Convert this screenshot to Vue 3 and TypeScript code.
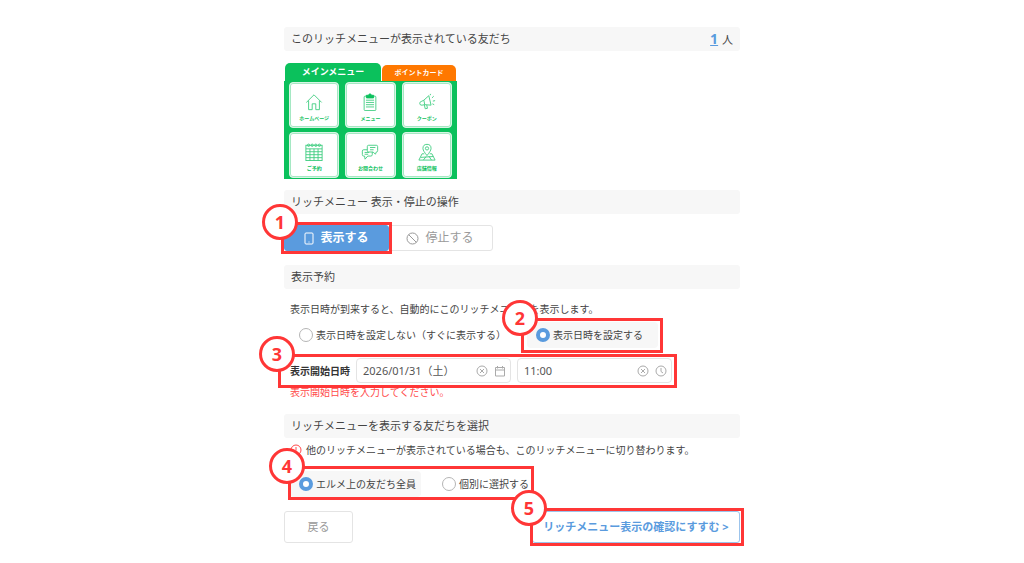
<script setup lang="ts">
import { ref } from 'vue'

interface Tile {
  label: string
  icon: string
}

const tiles: Tile[] = [
  { label: 'ホームページ', icon: 'home' },
  { label: 'メニュー', icon: 'clipboard' },
  { label: 'クーポン', icon: 'megaphone' },
  { label: 'ご予約', icon: 'calendar' },
  { label: 'お問合わせ', icon: 'chat' },
  { label: '店舗情報', icon: 'map' },
]

const schedule = ref('later')
const target = ref('all')
const startDate = ref('2026/01/31（土）')
const startTime = ref('11:00')
</script>

<template>
  <main class="page">
    <header class="bar bar-split">
      <span>このリッチメニューが表示されている友だち</span>
      <span class="count"><a href="#friends">1</a> 人</span>
    </header>

    <section class="preview" aria-label="リッチメニュー">
      <div class="tabs">
        <span class="tab tab-main">メインメニュー</span>
        <span class="tab tab-point">ポイントカード</span>
      </div>
      <div class="tiles">
        <div v-for="tile in tiles" :key="tile.icon" class="tile">
          <svg viewBox="0 0 20 20" aria-hidden="true">
            <template v-if="tile.icon === 'home'">
              <path d="M1.500 10.500 10 2l8.500 8.500M4 8.500V18.500h4v-6.500h4v6.500h4V8.500" />
            </template>
            <template v-else-if="tile.icon === 'clipboard'">
              <rect x="3.500" y="3.500" width="13" height="16" rx="1" />
              <path class="solid" d="M6 5.500V2.500h2.500a1.500 1.500 0 0 1 3 0H14v3z" />
              <path d="M5.500 8h9M5.500 10.500h9M5.500 13h9M5.500 15.500h9" />
            </template>
            <template v-else-if="tile.icon === 'megaphone'">
              <path d="M3.500 9.500 6.500 8 12 3l2.500 10.500-7-.5-3 .5a2 2 0 0 1-1-4zM6.500 8l1 5M7 13l1 4.500 2.500-.5-.8-3.800" />
              <path d="M13.500 2.500 14 1M15.500 5.500l2-2M16.500 9l2.500-.5M16 12l2 1" />
            </template>
            <template v-else-if="tile.icon === 'calendar'">
              <rect x="1" y="2.500" width="18" height="17" />
              <path d="M1 6.500h18M1 9.700h18M1 13h18M1 16.300h18M5.500 6.500v13M10 6.500v13M14.500 6.500v13" />
              <circle cx="4" cy="2.500" r="1.300" /><circle cx="8" cy="2.500" r="1.300" />
              <circle cx="12" cy="2.500" r="1.300" /><circle cx="16" cy="2.500" r="1.300" />
            </template>
            <template v-else-if="tile.icon === 'chat'">
              <path d="M8.500 2.500h8.500a1.500 1.500 0 0 1 1.500 1.500v4.500a1.500 1.500 0 0 1-1.500 1.500l-1 2.500-2.500-2.500h-5A1.500 1.500 0 0 1 7 8.500V4a1.500 1.500 0 0 1 1.500-1.500zM10 5h6M10 7.500h4" />
              <path d="M7 7.500H3A1.500 1.500 0 0 0 1.500 9v4A1.500 1.500 0 0 0 3 14.500h1l.5 3.500 3-3.500H11a1.500 1.500 0 0 0 1.500-1.500v-3M4 10.500h5M4 12.500h4" />
            </template>
            <template v-else>
              <path d="M10 14C7.500 10.500 5.500 8.500 5.500 6a4.500 4.500 0 0 1 9 0c0 2.500-2 4.500-4.500 8z" />
              <circle cx="10" cy="6" r="1.800" />
              <path d="M7 12H4.500l-3.500 7h18l-3.500-7H13M3 16l14-1M6 19l3-4M12 14.500l3 4.500" />
            </template>
          </svg>
          <span>{{ tile.label }}</span>
        </div>
      </div>
    </section>

    <h2 class="bar">リッチメニュー 表示・停止の操作</h2>
    <div class="actions">
      <div class="marked mark-show">
        <button type="button" class="btn btn-show">
          <svg width="10" height="13" viewBox="0 0 10 13" aria-hidden="true">
            <rect x="1" y="1" width="8" height="11" rx="1" /><path d="M4.500 10h1" />
          </svg>
          表示する
        </button>
        <div class="frame"><span class="step">1</span></div>
      </div>
      <button type="button" class="btn btn-stop">
        <svg width="13" height="13" viewBox="0 0 13 13" aria-hidden="true">
          <circle cx="6.500" cy="6.500" r="5.500" /><path d="m2.600 2.600 7.800 7.800" />
        </svg>
        停止する
      </button>
    </div>

    <h2 class="bar">表示予約</h2>
    <div class="body">
      <p class="lead">表示日時が到来すると、自動的にこのリッチメニューを表示します。</p>
      <div class="radios radios-schedule">
        <label class="choice">
          <input v-model="schedule" type="radio" name="schedule" value="now">表示日時を設定しない（すぐに表示する）
        </label>
        <div class="marked mark-schedule">
          <label class="choice">
            <input v-model="schedule" type="radio" name="schedule" value="later">表示日時を設定する
          </label>
          <div class="frame"><span class="step">2</span></div>
        </div>
      </div>

      <div class="marked mark-date">
        <div class="date-row">
          <label class="date-label" for="start-date">表示開始日時</label>
          <div class="field">
            <input id="start-date" v-model="startDate" type="text">
            <button type="button" aria-label="日付をクリア" @click="startDate = ''">
              <svg viewBox="0 0 12 12"><circle cx="6" cy="6" r="5" /><path d="m4 4 4 4M8 4 4 8" /></svg>
            </button>
            <svg viewBox="0 0 12 12" aria-hidden="true">
              <path d="M1.500 2.500h9v8.500h-9zM1.500 5h9M3.500 1v2.500M8.500 1v2.500" />
            </svg>
          </div>
          <div class="field">
            <input v-model="startTime" type="text" aria-label="表示開始時刻">
            <button type="button" aria-label="時刻をクリア" @click="startTime = ''">
              <svg viewBox="0 0 12 12"><circle cx="6" cy="6" r="5" /><path d="m4 4 4 4M8 4 4 8" /></svg>
            </button>
            <svg viewBox="0 0 12 12" aria-hidden="true">
              <circle cx="6" cy="6" r="5" /><path d="M6 3v3.500l2 1.500" />
            </svg>
          </div>
        </div>
        <div class="frame"><span class="step">3</span></div>
      </div>
      <p class="error">表示開始日時を入力してください。</p>
    </div>

    <h2 class="bar">リッチメニューを表示する友だちを選択</h2>
    <div class="body">
      <p class="note">
        <svg width="12" height="12" viewBox="0 0 12 12" aria-hidden="true">
          <circle cx="6" cy="6" r="5" /><path d="M6 3v3.500M6 8v1" />
        </svg>
        他のリッチメニューが表示されている場合も、このリッチメニューに切り替わります。
      </p>
      <div class="marked mark-target">
        <div class="radios">
          <label class="choice">
            <input v-model="target" type="radio" name="target" value="all">エルメ上の友だち全員
          </label>
          <label class="choice">
            <input v-model="target" type="radio" name="target" value="some">個別に選択する
          </label>
        </div>
        <div class="frame"><span class="step">4</span></div>
      </div>
    </div>

    <footer class="footer">
      <button type="button" class="btn btn-back">戻る</button>
      <div class="marked mark-next">
        <button type="button" class="btn btn-next">リッチメニュー表示の確認にすすむ &gt;</button>
        <div class="frame"><span class="step">5</span></div>
      </div>
    </footer>
  </main>
</template>

<style>
body {
  margin: 0;
  background: #fff;
}
</style>

<style scoped>
.page {
  box-sizing: border-box;
  max-width: 456px;
  margin: 0 auto;
  padding: 27px 0 20px;
  color: #444;
  font: 10px/16px "Noto Sans", "Noto Sans CJK JP", sans-serif;
}
.page * {
  box-sizing: border-box;
}
button,
input {
  margin: 0;
  font: inherit;
  color: inherit;
}
svg {
  display: block;
  flex: none;
  fill: none;
  stroke: currentColor;
  stroke-width: 1;
}
p {
  margin: 0;
}
.bar {
  display: flex;
  align-items: center;
  height: 24px;
  margin: 0;
  padding: 0 7px;
  border-radius: 3px;
  background: #f7f7f7;
  font-size: 11px;
  font-weight: 400;
}
.bar-split {
  justify-content: space-between;
}
.count a {
  margin-right: 1px;
  color: #5a9bde;
  font-size: 14px;
  font-weight: 700;
}

.preview {
  width: 173px;
  margin: 12px 0 11px;
  color: #0bc15c;
}
.tabs {
  display: flex;
  align-items: flex-end;
  gap: 1px;
  height: 18px;
  padding: 0 1px;
}
.tab {
  display: flex;
  align-items: center;
  justify-content: center;
  border-radius: 5px 5px 0 0;
  color: #fff;
  font-weight: 700;
}
.tab-main {
  flex: 96;
  height: 18px;
  background: #0bc15c;
  font-size: 9px;
}
.tab-point {
  flex: 74;
  height: 16px;
  background: #ff7800;
  font-size: 7px;
}
.tiles {
  display: grid;
  grid-template-columns: repeat(3, 1fr);
  gap: 4px 6px;
  padding: 1px 5px;
  background: #0bc15c;
}
.tile {
  display: flex;
  flex-direction: column;
  align-items: center;
  height: 46px;
  padding-top: 10px;
  border: 1px solid #d8f5e5;
  border-radius: 4px;
  background: #fff;
  box-shadow: inset 0 0 0 1px #a5e8c3;
  font-size: 5px;
  font-weight: 700;
  line-height: 8px;
}
.tile svg {
  width: 18px;
  height: 18px;
  margin-bottom: 3px;
  color: #3fcd80;
}
.tile .solid {
  fill: #0bc15c;
  stroke: #0bc15c;
}

.btn {
  display: flex;
  align-items: center;
  justify-content: center;
  padding: 0;
  border: 1px solid #e4e4e4;
  border-radius: 3px;
  background: #fff;
  color: #999;
}
.actions {
  display: flex;
  margin: 11px 0 14px;
}
.btn-show,
.btn-stop {
  gap: 6px;
  height: 26px;
  font-size: 12px;
}
.btn-show {
  width: 105px;
  border-color: #5a9bde;
  background: #5a9bde;
  color: #fff;
  font-weight: 700;
}
.btn-stop {
  width: 104px;
  padding-right: 2px;
}

.body {
  padding-left: 6px;
}
.lead {
  padding: 12px 0 5px;
}
.radios {
  display: flex;
  gap: 12px;
  white-space: nowrap;
}
.radios-schedule {
  gap: 16px;
}
.choice {
  display: flex;
  align-items: center;
  gap: 3px;
  min-width: 131px;
  height: 26px;
  padding: 0 5px 0 9px;
  border-radius: 4px;
}
.mark-target .choice + .choice {
  min-width: 0;
}
.choice:has(input:checked) {
  background: #f7f7f7;
}
.choice input {
  appearance: none;
  width: 14px;
  height: 14px;
  border: 1px solid #b5b5b5;
  border-radius: 50%;
  background: #fff;
}
.choice input:checked {
  border: 4px solid #5a9bde;
}

.mark-date {
  width: fit-content;
  margin-top: 10px;
}
.date-row {
  display: flex;
  align-items: center;
  gap: 6px;
}
.date-label {
  color: #333;
  font-weight: 700;
}
.field {
  display: flex;
  align-items: center;
  gap: 6px;
  width: 155px;
  height: 25px;
  padding: 0 4px 0 6px;
  border: 1px solid #e4e4e4;
  border-radius: 4px;
  color: #aaa;
}
.field input {
  flex: 1;
  min-width: 0;
  padding: 0;
  border: 0;
  outline: 0;
  background: none;
  color: #555;
  font-size: 11px;
}
.field button {
  padding: 0;
  border: 0;
  background: none;
}
.field svg {
  width: 12px;
  height: 12px;
}
.error {
  padding: 1px 0 14px;
  color: #ff4a4a;
}
.note {
  display: flex;
  align-items: center;
  gap: 4px;
  padding: 4px 0 13px;
  white-space: nowrap;
}
.note svg {
  color: #ff4a4a;
}
.mark-target {
  width: fit-content;
}
.footer {
  display: flex;
  justify-content: space-between;
  margin-top: 14px;
}
.btn-back,
.btn-next {
  height: 32px;
  font-size: 11px;
}
.btn-back {
  width: 69px;
}
.btn-next {
  width: 208px;
  border-color: #9cc4ec;
  color: #5a9bde;
  font-weight: 700;
}

/* Numbered red frames laid over the controls they point at */
.marked {
  position: relative;
}
.frame {
  position: absolute;
  inset: -3px;
  z-index: 1;
  border: 3px solid #ff3636;
  pointer-events: none;
}
.mark-schedule .frame {
  inset: -4px -5px -5px -6px;
}
.mark-date .frame {
  inset: -4px -5px -5px -12px;
}
.mark-target .frame {
  inset: -5px 0 -3px -2px;
}
.mark-next .frame {
  inset: -3px -4px -3px -2px;
}
.step {
  position: absolute;
  top: -21px;
  left: -22px;
  display: flex;
  align-items: center;
  justify-content: center;
  width: 36px;
  height: 36px;
  border: 3px solid #ff3636;
  border-radius: 50%;
  background: #fff;
  color: #ff3636;
  font-size: 18px;
  font-weight: 700;
}
</style>
